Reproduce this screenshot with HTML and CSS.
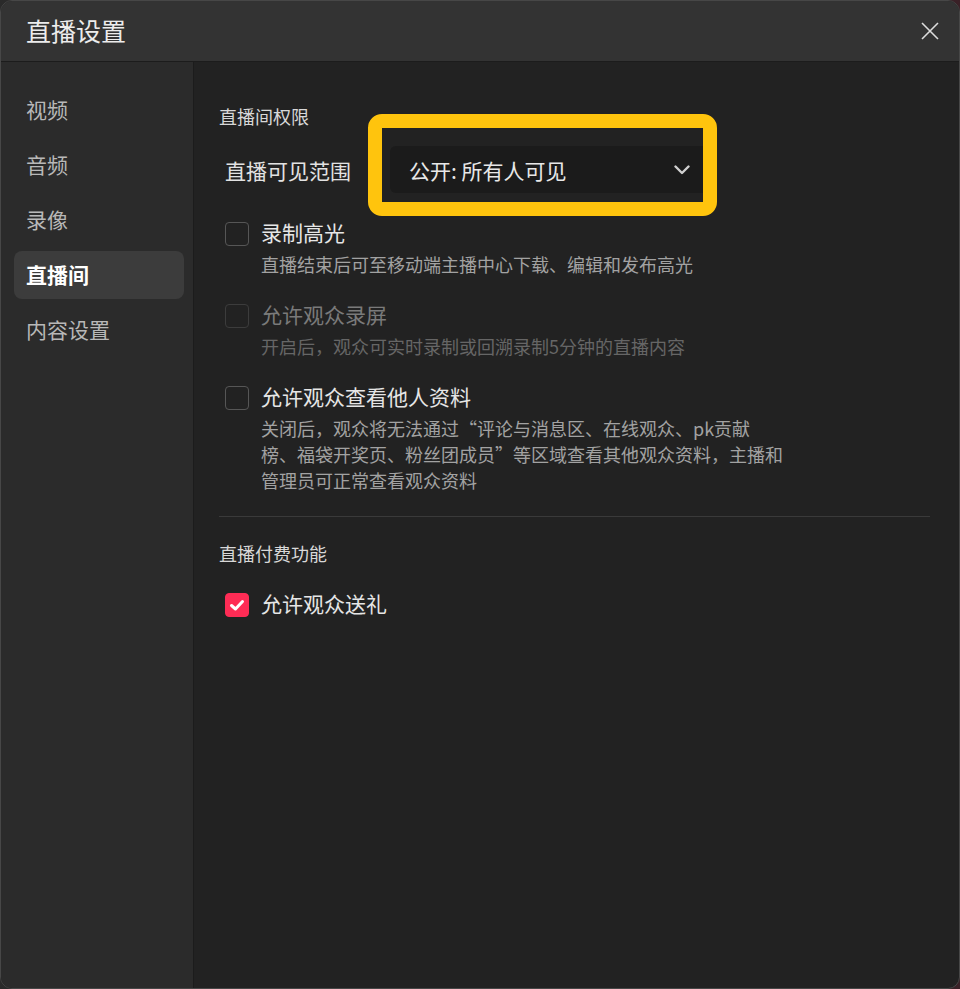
FILE: index.html
```html
<!DOCTYPE html>
<html lang="zh-CN">
<head>
    <meta charset="UTF-8">
    <meta name="viewport" content="width=device-width, initial-scale=1.0">
    <title>直播设置</title>
    <link rel="stylesheet" href="styles.css">
</head>
<body>

    <div class="window">
        <!-- Title bar -->
        <div class="header">
            <h1 class="title">直播设置</h1>
            <button class="close-btn" type="button" aria-label="关闭">
                <svg width="18" height="18" viewBox="0 0 18 18">
                    <path d="M1 1 L17 17 M17 1 L1 17" stroke="#dcdcdc" stroke-width="1.6" fill="none"/>
                </svg>
            </button>
        </div>

        <div class="content">
            <!-- Side menu -->
            <ul class="sidebar">
                <li class="menu-item">视频</li>
                <li class="menu-item">音频</li>
                <li class="menu-item">录像</li>
                <li class="menu-item active">直播间</li>
                <li class="menu-item">内容设置</li>
            </ul>

            <!-- Settings panel -->
            <div class="panel">
                <div class="section-title">直播间权限</div>

                <div class="field-row">
                    <span class="field-label">直播可见范围</span>
                    <div class="select-wrap">
                        <div class="select">
                            <span>公开: 所有人可见</span>
                            <svg width="16" height="10" viewBox="0 0 16 10">
                                <path d="M1.5 1.5 L8 8 L14.5 1.5" stroke="#d0d0d0" stroke-width="2.4" fill="none" stroke-linecap="round" stroke-linejoin="round"/>
                            </svg>
                        </div>
                        <div class="highlight"></div>
                    </div>
                </div>

                <div class="option-list">
                    <div class="option">
                        <span class="checkbox"></span>
                        <div class="option-text">
                            <div class="option-label">录制高光</div>
                            <div class="option-desc">直播结束后可至移动端主播中心下载、编辑和发布高光</div>
                        </div>
                    </div>

                    <div class="option disabled">
                        <span class="checkbox"></span>
                        <div class="option-text">
                            <div class="option-label">允许观众录屏</div>
                            <div class="option-desc">开启后，观众可实时录制或回溯录制5分钟的直播内容</div>
                        </div>
                    </div>

                    <div class="option">
                        <span class="checkbox"></span>
                        <div class="option-text">
                            <div class="option-label">允许观众查看他人资料</div>
                            <div class="option-desc">关闭后，观众将无法通过“评论与消息区、在线观众、pk贡献<br>榜、福袋开奖页、粉丝团成员”等区域查看其他观众资料，主播和<br>管理员可正常查看观众资料</div>
                        </div>
                    </div>
                </div>

                <div class="divider"></div>

                <div class="section-title">直播付费功能</div>

                <div class="option-list paid">
                    <div class="option">
                        <span class="checkbox checked">
                            <svg width="24" height="24" viewBox="0 0 24 24">
                                <path d="M6.5 12.5 L10.5 16 L17.5 8.5" stroke="#fff" stroke-width="3" fill="none" stroke-linecap="round" stroke-linejoin="round"/>
                            </svg>
                        </span>
                        <div class="option-text">
                            <div class="option-label">允许观众送礼</div>
                        </div>
                    </div>
                </div>
            </div>
        </div>
    </div>

</body>
</html>
```

FILE: styles.css
```css
* {
    box-sizing: border-box;
}

body {
    margin: 0;
    background: linear-gradient(90deg, #2a2a2a, #3a2127);
    font-family: "Noto Sans CJK SC", "Noto Sans", sans-serif;
    color: #e6e6e6;
}

.window {
    width: 960px;
    height: 989px;
    display: flex;
    flex-direction: column;
    border: 1px solid #474747;
    border-radius: 12px;
    overflow: hidden;
    background: #222;
}

.header {
    height: 61px;
    flex-shrink: 0;
    display: flex;
    align-items: center;
    justify-content: space-between;
    padding: 0 20px 0 25px;
    background: #333;
    border-bottom: 1px solid #1c1c1c;
}

.title {
    margin: 0 0 2px;
    font-size: 25px;
    font-weight: 400;
    color: #ececec;
    line-height: 30px;
}

.close-btn {
    background: none;
    border: none;
    padding: 0;
    width: 18px;
    height: 18px;
    cursor: pointer;
    display: flex;
}

.content {
    flex: 1;
    display: flex;
}

.sidebar {
    width: 193px;
    flex-shrink: 0;
    margin: 0;
    padding: 24px 9px 0 13px;
    list-style: none;
    background: #2b2b2b;
    border-right: 1px solid #1c1c1c;
    display: flex;
    flex-direction: column;
    gap: 7px;
}

.menu-item {
    height: 48px;
    line-height: 46px;
    padding-left: 12px;
    font-size: 21px;
    color: #b8b8b8;
    border-radius: 8px;
}

.menu-item.active {
    background: #3c3c3c;
    color: #fff;
    font-weight: 700;
}

.panel {
    flex: 1;
    padding: 41px 29px 0 25px;
}

.section-title {
    font-size: 18px;
    line-height: 26px;
    color: #d8d8d8;
}

.field-row {
    display: flex;
    align-items: center;
    gap: 39px;
    margin: 17px 0 0 6px;
}

.field-label {
    font-size: 21px;
    color: #e2e2e2;
}

.select-wrap {
    position: relative;
}

.select {
    width: 320px;
    height: 47px;
    display: flex;
    align-items: center;
    justify-content: space-between;
    padding: 0 20px 0 19px;
    background: #1b1b1b;
    border-radius: 6px;
    font-size: 21px;
    color: #e8e8e8;
}

.highlight {
    position: absolute;
    left: -22px;
    top: -32px;
    width: 349px;
    height: 102px;
    border: 14px solid #ffc40d;
    border-radius: 14px;
    pointer-events: none;
}

.option-list {
    display: flex;
    flex-direction: column;
    gap: 27px;
    margin: 29px 0 0 6px;
}

.option-list.paid {
    margin-top: 27px;
}

.option {
    display: flex;
    gap: 12px;
}

.checkbox {
    width: 24px;
    height: 24px;
    flex-shrink: 0;
    border: 1px solid #565656;
    border-radius: 4px;
}

.checkbox.checked {
    background: #fe2c55;
    border-color: #fe2c55;
    display: flex;
    align-items: center;
    justify-content: center;
}

.checkbox.checked svg {
    margin: -1px;
}

.option-label {
    font-size: 21px;
    line-height: 20px;
    color: #e6e6e6;
}

.option-desc {
    margin-top: 9px;
    max-width: 560px;
    font-size: 18px;
    line-height: 26px;
    color: #a2a2a2;
}

.option.disabled .checkbox {
    border-color: #3c3c3c;
}

.option.disabled .option-label {
    color: #7a7a7a;
}

.option.disabled .option-desc {
    color: #666;
}

.divider {
    height: 1px;
    margin: 23px 0;
    background: #3a3a3a;
}
```
